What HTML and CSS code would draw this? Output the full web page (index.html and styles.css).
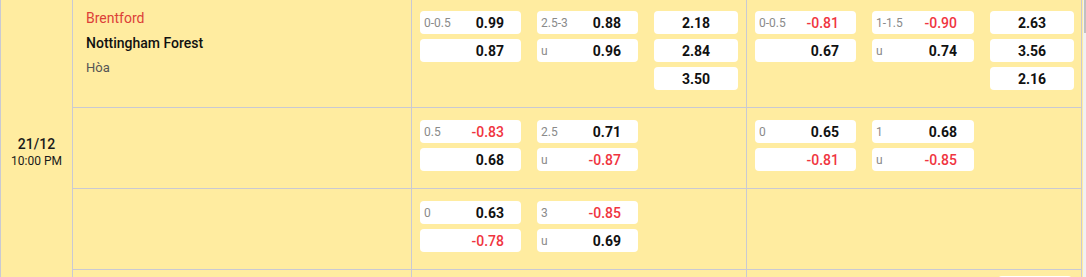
FILE: index.html
```html
<!DOCTYPE html>
<html lang="vi">
<head>
<meta charset="utf-8">
<title>Odds</title>
<link rel="stylesheet" href="styles.css">
</head>
<body>
<div class="page">
  <div class="table">
    <div class="date-col">
      <div class="date">21/12</div>
      <div class="time">10:00 PM</div>
    </div>
    <div class="rows">
      <div class="row r1">
        <div class="team">
          <div class="home">Brentford</div>
          <div class="away">Nottingham Forest</div>
          <div class="draw">Hòa</div>
        </div>
        <div class="sec">
          <div class="col c1">
            <div class="box"><span class="lbl">0-0.5</span><span class="val">0.99</span></div>
            <div class="box"><span class="lbl"></span><span class="val">0.87</span></div>
          </div>
          <div class="col c2">
            <div class="box"><span class="lbl">2.5-3</span><span class="val">0.88</span></div>
            <div class="box"><span class="lbl">u</span><span class="val">0.96</span></div>
          </div>
          <div class="col c3">
            <div class="box"><span class="val">2.18</span></div>
            <div class="box"><span class="val">2.84</span></div>
            <div class="box"><span class="val">3.50</span></div>
          </div>
        </div>
        <div class="sec last">
          <div class="col c1">
            <div class="box"><span class="lbl">0-0.5</span><span class="val neg">-0.81</span></div>
            <div class="box"><span class="lbl"></span><span class="val">0.67</span></div>
          </div>
          <div class="col c2">
            <div class="box"><span class="lbl">1-1.5</span><span class="val neg">-0.90</span></div>
            <div class="box"><span class="lbl">u</span><span class="val">0.74</span></div>
          </div>
          <div class="col c3">
            <div class="box"><span class="val">2.63</span></div>
            <div class="box"><span class="val">3.56</span></div>
            <div class="box"><span class="val">2.16</span></div>
          </div>
        </div>
      </div>

      <div class="row">
        <div class="team"></div>
        <div class="sec">
          <div class="col c1">
            <div class="box"><span class="lbl">0.5</span><span class="val neg">-0.83</span></div>
            <div class="box"><span class="lbl"></span><span class="val">0.68</span></div>
          </div>
          <div class="col c2">
            <div class="box"><span class="lbl">2.5</span><span class="val">0.71</span></div>
            <div class="box"><span class="lbl">u</span><span class="val neg">-0.87</span></div>
          </div>
          <div class="col c3"></div>
        </div>
        <div class="sec last">
          <div class="col c1">
            <div class="box"><span class="lbl">0</span><span class="val">0.65</span></div>
            <div class="box"><span class="lbl"></span><span class="val neg">-0.81</span></div>
          </div>
          <div class="col c2">
            <div class="box"><span class="lbl">1</span><span class="val">0.68</span></div>
            <div class="box"><span class="lbl">u</span><span class="val neg">-0.85</span></div>
          </div>
          <div class="col c3"></div>
        </div>
      </div>

      <div class="row">
        <div class="team"></div>
        <div class="sec">
          <div class="col c1">
            <div class="box"><span class="lbl">0</span><span class="val">0.63</span></div>
            <div class="box"><span class="lbl"></span><span class="val neg">-0.78</span></div>
          </div>
          <div class="col c2">
            <div class="box"><span class="lbl">3</span><span class="val neg">-0.85</span></div>
            <div class="box"><span class="lbl">u</span><span class="val">0.69</span></div>
          </div>
          <div class="col c3"></div>
        </div>
        <div class="sec last">
          <div class="col c1"></div>
          <div class="col c2"></div>
          <div class="col c3"></div>
        </div>
      </div>

      <div class="row r4">
        <div class="team"></div>
        <div class="sec"></div>
        <div class="sec last">
          <div class="next-box"></div>
        </div>
      </div>
    </div>
  </div>
  <div class="scrollbar"><div class="thumb"></div></div>
</div>
</body>
</html>
```

FILE: styles.css
```css
* {
  box-sizing: border-box;
}

html, body {
  margin: 0;
  padding: 0;
  background: #f1f1f1;
  font-family: Roboto, "Liberation Sans", Arial, sans-serif;
  overflow: hidden;
}

.page {
  display: flex;
  width: 1086px;
  height: 277px;
  overflow: hidden;
}

.table {
  width: 1083px;
  display: flex;
  background: #ffeca0;
  border-left: 1px solid #c9c9d3;
  padding-right: 1px;
}

.date-col {
  width: 72px;
  flex: none;
  border-right: 1px solid #c9c9d3;
  display: flex;
  flex-direction: column;
  align-items: center;
  padding-top: 136px;
  color: #1a1a1a;
}

.date {
  font-size: 14px;
  font-weight: 500;
  line-height: 17px;
}

.time {
  font-size: 12px;
  line-height: 17px;
}

.rows {
  flex: 1;
  display: flex;
  flex-direction: column;
}

.row {
  display: flex;
  border-bottom: 1px solid #c9c9d3;
  height: 81px;
  flex: none;
}

.row.r1 {
  height: 108px;
}

.row.r4 {
  border-bottom: none;
  flex: 1;
  overflow: hidden;
}

.team {
  width: 339px;
  flex: none;
  border-right: 1px solid #c9c9d3;
  padding: 6px 0 0 13px;
}

.home {
  color: #dc4038;
  font-size: 14px;
  line-height: 24px;
}

.away {
  color: #111;
  font-size: 14px;
  font-weight: 500;
  line-height: 26px;
}

.draw {
  color: #555;
  font-size: 13px;
  line-height: 24px;
}

.sec {
  width: 335px;
  flex: none;
  border-right: 1px solid #c9c9d3;
  display: flex;
  gap: 16px;
  padding: 12px 7px 0 8px;
}

.r1 .sec {
  padding-top: 11px;
}

.col {
  display: flex;
  flex-direction: column;
  gap: 5px;
}

.c1, .c2 {
  width: 101px;
}

.sec.last .c2 {
  width: 102px;
}

.c3 {
  width: 84px;
}

.box {
  height: 23px;
  background: #fff;
  border-radius: 4px;
  display: flex;
  align-items: center;
  padding: 0 17px 0 4px;
}

.c3 .box {
  justify-content: center;
  padding: 0;
}

.lbl {
  flex: 1;
  font-size: 12px;
  color: #8a8a8a;
}

.val {
  font-size: 14px;
  font-weight: 700;
  color: #111;
}

.val.neg {
  font-weight: 500;
  color: #f0353f;
}

.r4 .sec {
  padding: 6px 0 0 251px;
}

.next-box {
  width: 74px;
  height: 23px;
  background: #fff;
  border-radius: 4px;
}

.scrollbar {
  width: 3px;
  background: #f1f1f1;
  display: flex;
  justify-content: flex-end;
}

.thumb {
  width: 2px;
  height: 33px;
  background: #c1c1c1;
}
```
